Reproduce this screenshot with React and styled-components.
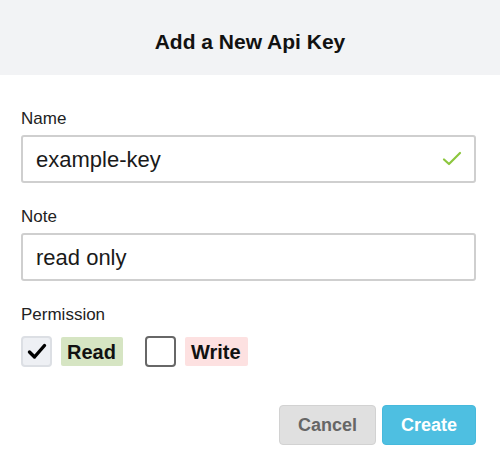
import React from 'react';
import styled, { createGlobalStyle } from 'styled-components';

const GlobalStyle = createGlobalStyle`
  body {
    margin: 0;
    background: #fff;
    font-family: "Liberation Sans", Arial, sans-serif;
    color: #1a1a1a;
  }
`;

const Dialog = styled.section`
  width: 500px;
  height: 461px;
  background: #fff;
`;

const Header = styled.header`
  height: 75px;
  display: flex;
  align-items: center;
  justify-content: center;
  background: #f2f3f5;

  & h1 {
    margin: 0;
    padding-top: 8px;
    font-size: 21px;
    font-weight: bold;
    color: #111;
  }
`;

const Form = styled.form`
  display: flex;
  flex-flow: column nowrap;
  padding: 35px 24px 0 21px;
`;

const Label = styled.label`
  display: block;
  font-size: 17px;
  line-height: 18px;
  color: #222;
  margin-bottom: ${({ $gap }) => $gap || 7}px;
`;

const Field = styled.div`
  position: relative;
  margin-bottom: 25px;
`;

const Input = styled.input`
  box-sizing: border-box;
  width: 100%;
  height: 48px;
  padding: 2px 40px 0 13px;
  border: 2px solid #cfcfcf;
  border-radius: 3px;
  font-family: inherit;
  font-size: 22px;
  color: #1a1a1a;
  background: #fff;
  outline: none;
`;

const Valid = styled.svg`
  position: absolute;
  right: 14px;
  top: 16px;
  width: 20px;
  height: 16px;
`;

const Options = styled.div`
  display: flex;
  align-items: center;
  gap: 22px;
`;

const Option = styled.label`
  display: flex;
  align-items: center;
  gap: 9px;
  cursor: pointer;
`;

const Box = styled.span`
  box-sizing: border-box;
  width: 31px;
  height: 31px;
  display: flex;
  align-items: center;
  justify-content: center;
  border-radius: 4px;
  border: ${({ $checked }) => ($checked ? '2px solid #dcdfe4' : '2px solid #676767')};
  background: ${({ $checked }) => ($checked ? '#eef0f4' : '#fff')};
`;

const Tag = styled.span`
  display: inline-block;
  padding: 3px 7px 2px 6px;
  font-size: 20px;
  line-height: 24px;
  font-weight: bold;
  color: #111;
  border-radius: 2px;
  background: ${({ $tone }) => ($tone === 'read' ? '#d6e5c3' : '#fde1e1')};
`;

const Actions = styled.div`
  display: flex;
  justify-content: flex-end;
  gap: 6px;
  margin-top: 38px;
`;

const Button = styled.button`
  height: 40px;
  padding: 0 18px;
  border-radius: 4px;
  font-family: inherit;
  font-size: 18px;
  font-weight: bold;
  cursor: pointer;
  border: 1px solid ${({ $primary }) => ($primary ? '#46b9dc' : '#d2d2d2')};
  background: ${({ $primary }) => ($primary ? '#4ebfe1' : '#e0e0e0')};
  color: ${({ $primary }) => ($primary ? '#fff' : '#666')};
`;

const Check = () => (
  <svg width="20" height="17" viewBox="0 0 20 17" aria-hidden="true">
    <path d="M2.5 9 L7.5 14 L17.5 2.5" fill="none" stroke="#000" strokeWidth="3.4" strokeLinecap="round" strokeLinejoin="round" />
  </svg>
);

const App = () => (
  <>
    <GlobalStyle />
    <Dialog>
      <Header>
        <h1>Add a New Api Key</h1>
      </Header>
      <Form onSubmit={(e) => e.preventDefault()}>
        <Label htmlFor="name">Name</Label>
        <Field>
          <Input id="name" defaultValue="example-key" />
          <Valid viewBox="0 0 20 16" aria-hidden="true">
            <path d="M2 8.5 L7 13 L18 2" fill="none" stroke="#8cc63e" strokeWidth="2.2" strokeLinecap="round" strokeLinejoin="round" />
          </Valid>
        </Field>

        <Label htmlFor="note">Note</Label>
        <Field>
          <Input id="note" defaultValue="read only" />
        </Field>

        <Label as="div" $gap={12}>Permission</Label>
        <Options>
          <Option>
            <Box $checked>
              <Check />
            </Box>
            <Tag $tone="read">Read</Tag>
          </Option>
          <Option>
            <Box />
            <Tag $tone="write">Write</Tag>
          </Option>
        </Options>

        <Actions>
          <Button type="button">Cancel</Button>
          <Button type="submit" $primary>Create</Button>
        </Actions>
      </Form>
    </Dialog>
  </>
);

export default App;
